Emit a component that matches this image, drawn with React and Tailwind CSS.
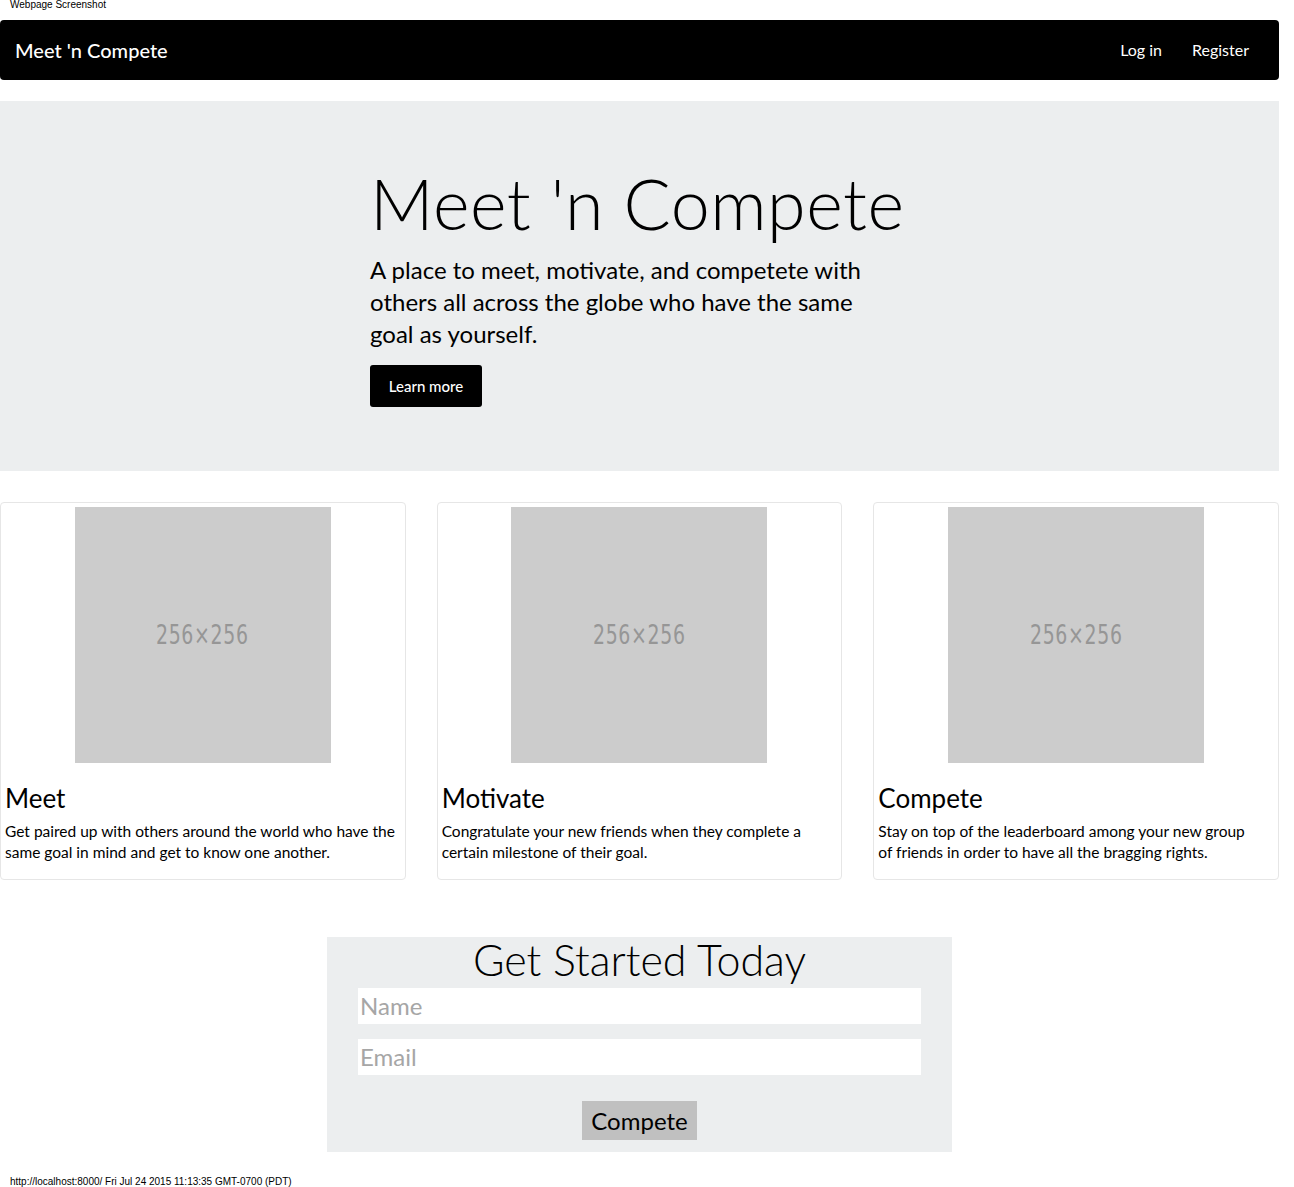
import React from 'react'

const cards = [
    {
        title: "Meet",
        text: "Get paired up with others around the world who have the same goal in mind and get to know one another.",
    },
    {
        title: "Motivate",
        text: "Congratulate your new friends when they complete a certain milestone of their goal.",
    },
    {
        title: "Compete",
        text: "Stay on top of the leaderboard among your new group of friends in order to have all the bragging rights.",
        narrow: true,
    },
]

const Placeholder = () => (
    <div className="w-[256px] h-[256px] bg-[#cccccc] flex items-center justify-center mx-auto">
        <span className="inline-block scale-x-[0.7] text-[27px] text-[#969696] font-['DejaVu_Sans',sans-serif] tracking-[1px]">256×256</span>
    </div>
)

const App = () => {
    return (
        <div className="w-[1294px] min-h-[1187px] bg-white text-black font-['Lato',sans-serif]">
            <div className="h-[20px] px-[10px] text-[10px] leading-[10px] font-['Liberation_Sans',sans-serif]">Webpage Screenshot</div>
            <div className="w-[1279px]">
                <nav className="h-[60px] bg-black rounded-[4px] flex items-center justify-between px-[15px]">
                    <span className="text-white text-[20px] font-medium">Meet 'n Compete</span>
                    <div className="flex items-center gap-[30px] pr-[15px] text-white text-[16px]">
                        <a>Log in</a>
                        <a>Register</a>
                    </div>
                </nav>

                <section className="mt-[21px] h-[370px] bg-[#eceeef] pt-[62px]">
                    <div className="ml-[370px] w-[520px]">
                        <h1 className="text-[70px] leading-[80px] font-light tracking-[0.5px] whitespace-nowrap">Meet 'n Compete</h1>
                        <p className="text-[24px] leading-[32px] mt-[11px]">A place to meet, motivate, and competete with others all across the globe who have the same goal as yourself.</p>
                        <button className="mt-[15px] w-[112px] h-[42px] bg-black text-white rounded-[3px] text-[15px] font-medium">Learn more</button>
                    </div>
                </section>

                <section className="mt-[31px] grid grid-cols-3 gap-[31px]">
                    {cards.map((c) => (
                        <div key={c.title} className="border border-[#e6e6e6] rounded-[4px] pt-[4px] px-[4px] pb-[16px]">
                            <Placeholder />
                            <h3 className="text-[26px] leading-[30px] mt-[20px]">{c.title}</h3>
                            <p className={c.narrow ? "text-[15.5px] leading-[21px] mt-[8px] pr-[16px]" : "text-[15.5px] leading-[21px] mt-[8px]"}>{c.text}</p>
                        </div>
                    ))}
                </section>

                <section className="mt-[57px] mx-auto w-[625px] h-[215px] bg-[#eceeef] flex flex-col items-center">
                    <h2 className="text-[43px] leading-[48px] mt-[-1px] font-light">Get Started Today</h2>
                    <input placeholder="Name" className="mt-[4px] w-[563px] h-[36px] bg-white px-[2px] text-[24px] placeholder:text-[#a6a6a6] outline-none" />
                    <input placeholder="Email" className="mt-[15px] w-[563px] h-[36px] bg-white px-[2px] text-[24px] placeholder:text-[#a6a6a6] outline-none" />
                    <button className="mt-[26px] w-[115px] h-[39px] bg-[#c0c0c0] text-[24px]">Compete</button>
                </section>
            </div>
            <div className="mt-[22px] px-[10px] text-[10px] font-['Liberation_Sans',sans-serif]">http://localhost:8000/ Fri Jul 24 2015 11:13:35 GMT-0700 (PDT)</div>
        </div>
    )
}

export default App
